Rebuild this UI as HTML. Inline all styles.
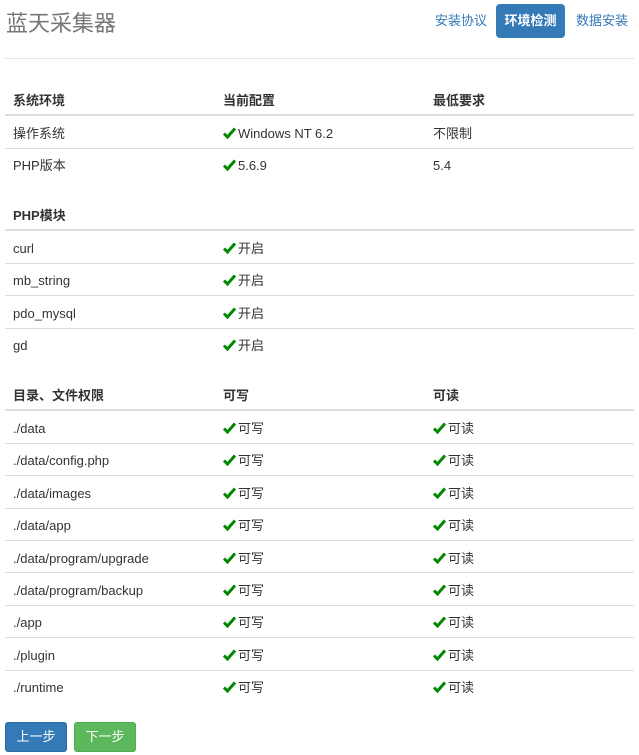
<!DOCTYPE html>
<html><head><meta charset="utf-8"><style>
body{margin:0;width:639px;height:755px;background:#fff;font-family:"Liberation Sans","Noto Sans CJK SC",sans-serif;font-size:13px;color:#333;position:relative;overflow:hidden}
.title{position:absolute;left:6px;top:6px;font-size:22px;color:#777}
.nav{position:absolute;top:4px;font-size:13px;color:#337ab7;height:34px;line-height:34px;white-space:nowrap}
.active{background:#337ab7;color:#fff;border-radius:4px;left:496px;width:69px;text-align:center;font-weight:bold}
.hr{position:absolute;left:5px;width:629px;top:58px;border-top:1px solid #e5e5e5}
table{position:absolute;left:5px;width:629px;border-collapse:collapse}
td,th{text-align:left;padding:8.5px 8px 5.5px;line-height:17.4px;height:17.4px;vertical-align:middle;box-sizing:content-box}
th{font-weight:bold;border-bottom:2px solid #ddd}
td{border-top:1px solid #ddd}
tr:nth-child(2) td{border-top:none}
col.a{width:210px}col.b{width:210px}
.ck{display:inline-block;width:13px;height:12px;vertical-align:-1px;margin-right:2px}
.btn{position:absolute;top:722px;height:28px;line-height:28px;color:#fff;font-size:13px;text-align:center;border-radius:3px;width:60px}
</style></head><body>
<div class="title">蓝天采集器</div>
<div class="nav" style="left:435px">安装协议</div>
<div class="nav active">环境检测</div>
<div class="nav" style="left:576px">数据安装</div>
<div class="hr"></div>
<svg width="0" height="0" style="position:absolute"><defs><symbol id="c" viewBox="0 0 13 12"><path d="M1 6.5 L4.5 10 L12 1.5" stroke="#080" stroke-width="3" fill="none"/></symbol></defs></svg>
<table style="top:83px"><colgroup><col class="a"><col class="b"><col></colgroup>
<tr><th>系统环境</th><th>当前配置</th><th>最低要求</th></tr>
<tr><td>操作系统</td><td><svg class="ck"><use href="#c"/></svg>Windows NT 6.2</td><td>不限制</td></tr>
<tr><td>PHP版本</td><td><svg class="ck"><use href="#c"/></svg>5.6.9</td><td>5.4</td></tr>
</table>
<table style="top:198px"><colgroup><col class="a"><col class="b"><col></colgroup>
<tr><th>PHP模块</th><th></th><th></th></tr>
<tr><td>curl</td><td><svg class="ck"><use href="#c"/></svg>开启</td><td></td></tr>
<tr><td>mb_string</td><td><svg class="ck"><use href="#c"/></svg>开启</td><td></td></tr>
<tr><td>pdo_mysql</td><td><svg class="ck"><use href="#c"/></svg>开启</td><td></td></tr>
<tr><td>gd</td><td><svg class="ck"><use href="#c"/></svg>开启</td><td></td></tr>
</table>
<table style="top:378px"><colgroup><col class="a"><col class="b"><col></colgroup>
<tr><th>目录、文件权限</th><th>可写</th><th>可读</th></tr>
<tr><td>./data</td><td><svg class="ck"><use href="#c"/></svg>可写</td><td><svg class="ck"><use href="#c"/></svg>可读</td></tr>
<tr><td>./data/config.php</td><td><svg class="ck"><use href="#c"/></svg>可写</td><td><svg class="ck"><use href="#c"/></svg>可读</td></tr>
<tr><td>./data/images</td><td><svg class="ck"><use href="#c"/></svg>可写</td><td><svg class="ck"><use href="#c"/></svg>可读</td></tr>
<tr><td>./data/app</td><td><svg class="ck"><use href="#c"/></svg>可写</td><td><svg class="ck"><use href="#c"/></svg>可读</td></tr>
<tr><td>./data/program/upgrade</td><td><svg class="ck"><use href="#c"/></svg>可写</td><td><svg class="ck"><use href="#c"/></svg>可读</td></tr>
<tr><td>./data/program/backup</td><td><svg class="ck"><use href="#c"/></svg>可写</td><td><svg class="ck"><use href="#c"/></svg>可读</td></tr>
<tr><td>./app</td><td><svg class="ck"><use href="#c"/></svg>可写</td><td><svg class="ck"><use href="#c"/></svg>可读</td></tr>
<tr><td>./plugin</td><td><svg class="ck"><use href="#c"/></svg>可写</td><td><svg class="ck"><use href="#c"/></svg>可读</td></tr>
<tr><td>./runtime</td><td><svg class="ck"><use href="#c"/></svg>可写</td><td><svg class="ck"><use href="#c"/></svg>可读</td></tr>
</table>
<div class="btn" style="left:5px;background:#337ab7;border:1px solid #2e6da4">上一步</div>
<div class="btn" style="left:74px;background:#5cb85c;border:1px solid #4cae4c">下一步</div>
</body></html>
